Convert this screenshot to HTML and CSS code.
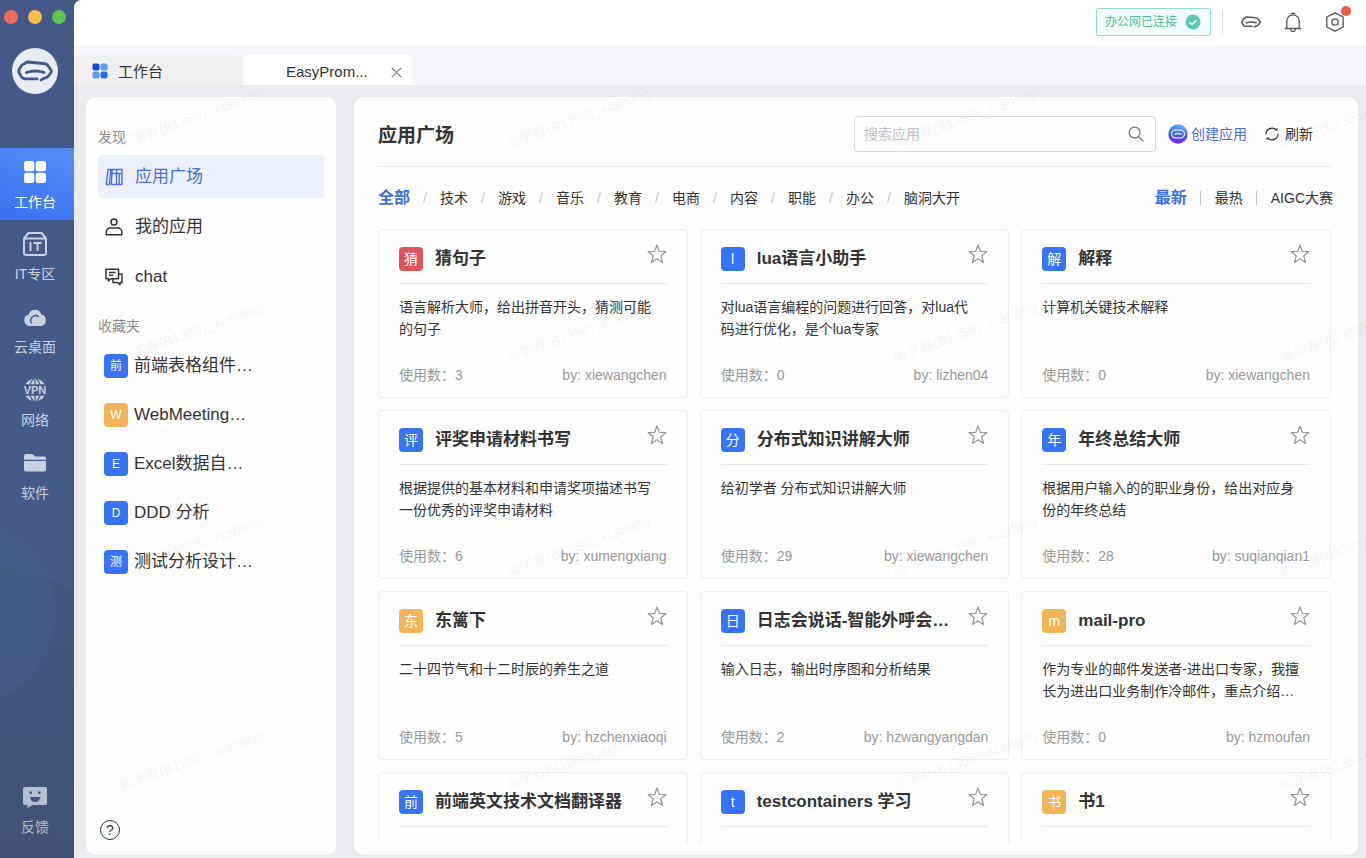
FILE: index.html
```html
<!DOCTYPE html>
<html lang="zh-CN">
<head>
<meta charset="utf-8">
<meta name="viewport" content="width=device-width, initial-scale=1">
<title>应用广场</title>
<link rel="stylesheet" href="styles.css">
</head>
<body>
<svg class="defs" aria-hidden="true">
  <symbol id="star" viewBox="0 0 20 20"><path d="M10 1l2.300 6.400 6.500.3-5 4.100 1.700 6.700L10 14.800l-5.500 3.700 1.700-6.700-5-4.100 6.500-.3z" fill="none" stroke="currentColor" stroke-width="1.300" stroke-linejoin="round"/></symbol>
  <symbol id="link" viewBox="0 0 46 46"><g fill="none" stroke="currentColor" stroke-linecap="round" stroke-linejoin="round"><path d="M15 14L31.500 15.500Q34.500 15.500 36 17.800L39 22Q39.700 23.300 39 24.500L36 28.500Q34.800 29.800 32.500 30L29 32M15 14L12 16Q10 16.500 9 18.200L7 22Q6.400 23.200 7 24.500L9.500 29Q10.500 30.700 13 30.800H25"/><path d="M14.500 24.500Q23 21.500 32 24.500"/></g></symbol>
</svg>

<div class="app">
  <aside class="rail">
    <div class="lights"><span class="light red"></span><span class="light amber"></span><span class="light green"></span></div>
    <div class="logo"><svg viewBox="0 0 46 46" stroke-width="2.800"><use href="#link" width="46" height="46"/></svg></div>
    <nav class="rail-nav">
      <a href="#" class="rail-item active">
        <svg viewBox="0 0 24 24" fill="currentColor"><rect x="1" y="1" width="10.300" height="10.300" rx="2.500"/><rect x="12.700" y="1" width="10.300" height="10.300" rx="2.500"/><rect x="1" y="12.700" width="10.300" height="10.300" rx="2.500"/><rect x="12.700" y="12.700" width="10.300" height="10.300" rx="2.500"/></svg>
        <span>工作台</span></a>
      <a href="#" class="rail-item">
        <svg viewBox="0 0 24 24" fill="none" stroke="currentColor" stroke-width="2"><path d="M1 6.500L5.500 1h13L23 6.500V21a2 2 0 0 1-2 2H3a2 2 0 0 1-2-2z" stroke-linejoin="round"/><path d="M1.500 6.500h21"/><path d="M7.500 10v9M10.500 11h8M14.500 11v8"/></svg>
        <span>IT专区</span></a>
      <a href="#" class="rail-item">
        <svg viewBox="0 0 24 24"><path fill="currentColor" d="M6 21a5.900 5.900 0 0 1-.3-11.500 6.600 6.600 0 0 1 12.700 0A5.900 5.900 0 0 1 18 21z"/><path d="M8.300 18a5 5 0 0 1 7.200-6.500" fill="none" stroke="#445987" stroke-width="1.400" stroke-linecap="round"/></svg>
        <span>云桌面</span></a>
      <a href="#" class="rail-item">
        <svg viewBox="0 0 24 24"><g fill="currentColor"><path d="M2.500 6.200A11 11 0 0 1 21.500 6.200z"/><path d="M2.500 17.800a11 11 0 0 0 19 0z"/></g><g fill="none" stroke="#445987" stroke-width="1.200"><path d="M7 6.500Q8 3 10.500 1M17 6.500Q16 3 13.500 1M12 1v5.500M7 17.500Q8 21 10.500 23M17 17.500Q16 21 13.500 23M12 17.500V23"/></g><text class="vpn" x="12" y="16">VPN</text></svg>
        <span>网络</span></a>
      <a href="#" class="rail-item">
        <svg viewBox="0 0 24 24" fill="currentColor"><path d="M1 5a2 2 0 0 1 2-2h6.500l2.500 2.500H21a2 2 0 0 1 2 2v1.200H1z"/><path d="M1 10h22v8.500a2 2 0 0 1-2 2H3a2 2 0 0 1-2-2z"/></svg>
        <span>软件</span></a>
    </nav>
    <a href="#" class="rail-item feedback">
      <svg viewBox="0 0 24 24"><path fill="currentColor" d="M2 2h20a2 2 0 0 1 2 2v14a2 2 0 0 1-2 2H9.500L4.500 23V20H2a2 2 0 0 1-2-2V4a2 2 0 0 1 2-2z"/><path fill="#43547a" d="M6.500 6.500H9V9H6.500zM15 6.500h2.500V9H15zM7 12h10.500Q16.500 17 12.200 17T7 12z"/></svg>
      <span>反馈</span></a>
  </aside>

  <div class="window">
    <header class="topbar">
      <button class="net" type="button">办公网已连接
        <svg viewBox="0 0 16 16"><circle cx="8" cy="8" r="7.500" fill="#5fcab2"/><path d="M4.500 8.200l2.500 2.300 4.500-4.500" fill="none" stroke="#fff" stroke-width="1.400"/></svg></button>
      <span class="bar-line"></span>
      <button class="tool" type="button" aria-label="链接"><svg viewBox="5 5 36 36" stroke-width="2.800"><use href="#link" width="46" height="46"/></svg></button>
      <button class="tool" type="button" aria-label="通知"><svg viewBox="0 0 20 20" fill="none" stroke="currentColor" stroke-width="1.300" stroke-linecap="round" stroke-linejoin="round"><path d="M2.300 16.500h15.400M3.800 16.300V9a6.200 6.200 0 0 1 12.400 0v7.300M8 1.300h4M7.800 17.500a2.200 2.200 0 0 0 4.400 0"/></svg></button>
      <button class="tool" type="button" aria-label="设置"><svg viewBox="0 0 20 20" fill="none" stroke="currentColor" stroke-width="1.300" stroke-linejoin="round"><path d="M10 .8l8.200 4.200v10L10 19.200 1.800 15V5z"/><circle cx="10" cy="10" r="3.200"/></svg><i class="dot"></i></button>
    </header>

    <nav class="tabs">
      <a href="#" class="tab home">
        <svg viewBox="0 0 16 16"><rect x=".5" y=".5" width="7" height="7" rx="2" fill="#1147e0"/><rect x="8.500" y=".5" width="7" height="7" rx="2" fill="#5b9cf0"/><rect x=".5" y="8.500" width="7" height="7" rx="2" fill="#5b9cf0"/><rect x="8.500" y="8.500" width="7" height="7" rx="2" fill="#2a6cf0"/></svg>
        <span>工作台</span></a>
      <div class="tab current"><a href="#">EasyProm...</a>
        <button type="button" aria-label="关闭"><svg viewBox="0 0 10 10"><path d="M.7.7l8.600 8.600M9.300.7L.7 9.300" stroke="currentColor" stroke-width="1"/></svg></button></div>
    </nav>

    <div class="content">
      <aside class="panel side">
        <h2 class="group">发现</h2>
        <nav class="menu">
          <a href="#" class="menu-item selected"><svg viewBox="0 0 18 18" fill="none" stroke="currentColor" stroke-width="1.400" stroke-linejoin="round"><path d="M3 1.500H6L4.300 16.500H1.200zM7.200 1.500h4.300v15H6.300zM11.500 1.500H17v15h-5.500M7 5.500h10M14.200 5.500v11"/></svg>应用广场</a>
          <a href="#" class="menu-item"><svg viewBox="0 0 18 18" fill="none" stroke="currentColor" stroke-width="1.500"><circle cx="9" cy="4" r="3"/><path d="M1.200 16.700V14a4 4 0 0 1 4-4h7.600a4 4 0 0 1 4 4v2.700z" stroke-linejoin="round"/></svg>我的应用</a>
          <a href="#" class="menu-item"><svg viewBox="0 0 18 18" fill="none" stroke="currentColor" stroke-width="1.500" stroke-linejoin="round"><path d="M1 1.200h12.500v9.500H6L3.500 13v-2.300H1z"/><path d="M13.500 6H17v8.500h-2v2.200l-2.500-2.200H8v-3.500M4 4.500h6.500M4 7.300h4"/></svg>chat</a>
        </nav>
        <h2 class="group favs-title">收藏夹</h2>
        <nav class="favs">
          <a href="#" class="fav"><span class="badge small">前</span>前端表格组件…</a>
          <a href="#" class="fav"><span class="badge small orange">W</span>WebMeeting…</a>
          <a href="#" class="fav"><span class="badge small">E</span>Excel数据自…</a>
          <a href="#" class="fav"><span class="badge small">D</span>DDD 分析</a>
          <a href="#" class="fav"><span class="badge small">测</span>测试分析设计…</a>
        </nav>
        <button class="help" type="button" aria-label="帮助">?</button>
      </aside>

      <main class="panel main">
        <div class="head">
          <h1>应用广场</h1>
          <form class="search"><input type="text" placeholder="搜索应用" aria-label="搜索应用"><button type="submit" aria-label="搜索"><svg viewBox="0 0 16 16" fill="none" stroke="currentColor" stroke-width="1.300" stroke-linecap="round"><circle cx="6.600" cy="6.600" r="5.400"/><path d="M10.600 10.600l4.400 4.400"/></svg></button></form>
          <button class="create" type="button"><svg viewBox="0 0 20 20"><defs><linearGradient id="orb" x1=".6" y1="0" x2=".4" y2="1"><stop offset="0" stop-color="#5cb4f5"/><stop offset=".55" stop-color="#3d5cf0"/><stop offset="1" stop-color="#8a1fe8"/></linearGradient></defs><circle cx="10" cy="10" r="9.700" fill="url(#orb)"/><rect x="3.500" y="6.200" width="13" height="7.600" rx="3.800" fill="none" stroke="#e4ecff" stroke-width="1.300"/><path d="M6.500 10.500Q10 8.500 13.500 10.500" stroke="#e4ecff" stroke-width="1.300" fill="none"/></svg>创建应用</button>
          <button class="refresh" type="button"><svg viewBox="0 0 14 14" fill="none" stroke="currentColor" stroke-width="1.200"><path d="M1 7.500A6 6 0 0 1 11.500 3.200M13 6.500A6 6 0 0 1 2.500 10.800"/><path d="M9.500 3.500h3V.8zM4.500 10.500h-3v2.700z" fill="currentColor" stroke="none"/></svg>刷新</button>
        </div>

        <div class="filters">
          <nav class="cats">
            <a href="#" class="on">全部</a><a href="#">技术</a><a href="#">游戏</a><a href="#">音乐</a><a href="#">教育</a><a href="#">电商</a><a href="#">内容</a><a href="#">职能</a><a href="#">办公</a><a href="#">脑洞大开</a>
          </nav>
          <nav class="sorts"><a href="#" class="on">最新</a><a href="#">最热</a><a href="#">AIGC大赛</a></nav>
        </div>

        <div class="grid">
          <article class="card"><header><span class="badge red">猜</span><h3>猜句子</h3><button type="button" aria-label="收藏"><svg><use href="#star"/></svg></button></header><p>语言解析大师，给出拼音开头，猜测可能<br>的句子</p><footer><span>使用数：3</span><span>by: xiewangchen</span></footer></article>
          <article class="card"><header><span class="badge">l</span><h3>lua语言小助手</h3><button type="button" aria-label="收藏"><svg><use href="#star"/></svg></button></header><p>对lua语言编程的问题进行回答，对lua代<br>码进行优化，是个lua专家</p><footer><span>使用数：0</span><span>by: lizhen04</span></footer></article>
          <article class="card"><header><span class="badge">解</span><h3>解释</h3><button type="button" aria-label="收藏"><svg><use href="#star"/></svg></button></header><p>计算机关键技术解释</p><footer><span>使用数：0</span><span>by: xiewangchen</span></footer></article>
          <article class="card"><header><span class="badge">评</span><h3>评奖申请材料书写</h3><button type="button" aria-label="收藏"><svg><use href="#star"/></svg></button></header><p>根据提供的基本材料和申请奖项描述书写<br>一份优秀的评奖申请材料</p><footer><span>使用数：6</span><span>by: xumengxiang</span></footer></article>
          <article class="card"><header><span class="badge">分</span><h3>分布式知识讲解大师</h3><button type="button" aria-label="收藏"><svg><use href="#star"/></svg></button></header><p>给初学者 分布式知识讲解大师</p><footer><span>使用数：29</span><span>by: xiewangchen</span></footer></article>
          <article class="card"><header><span class="badge">年</span><h3>年终总结大师</h3><button type="button" aria-label="收藏"><svg><use href="#star"/></svg></button></header><p>根据用户输入的的职业身份，给出对应身<br>份的年终总结</p><footer><span>使用数：28</span><span>by: suqianqian1</span></footer></article>
          <article class="card"><header><span class="badge orange">东</span><h3>东篱下</h3><button type="button" aria-label="收藏"><svg><use href="#star"/></svg></button></header><p>二十四节气和十二时辰的养生之道</p><footer><span>使用数：5</span><span>by: hzchenxiaoqi</span></footer></article>
          <article class="card"><header><span class="badge">日</span><h3>日志会说话-智能外呼会…</h3><button type="button" aria-label="收藏"><svg><use href="#star"/></svg></button></header><p>输入日志，输出时序图和分析结果</p><footer><span>使用数：2</span><span>by: hzwangyangdan</span></footer></article>
          <article class="card"><header><span class="badge orange">m</span><h3>mail-pro</h3><button type="button" aria-label="收藏"><svg><use href="#star"/></svg></button></header><p>作为专业的邮件发送者-进出口专家，我擅<br>长为进出口业务制作冷邮件，重点介绍…</p><footer><span>使用数：0</span><span>by: hzmoufan</span></footer></article>
          <article class="card"><header><span class="badge">前</span><h3>前端英文技术文档翻译器</h3><button type="button" aria-label="收藏"><svg><use href="#star"/></svg></button></header></article>
          <article class="card"><header><span class="badge">t</span><h3>testcontainers 学习</h3><button type="button" aria-label="收藏"><svg><use href="#star"/></svg></button></header></article>
          <article class="card"><header><span class="badge orange">书</span><h3>书1</h3><button type="button" aria-label="收藏"><svg><use href="#star"/></svg></button></header></article>
        </div>
      </main>
    </div>
  </div>

  <div class="watermark" aria-hidden="true">
    <span>尚学春(B1358)_xcshang</span><span>尚学春(B1358)_xcshang</span><span>尚学春(B1358)_xcshang</span><span>尚学春(B1358)_xcshang</span>
    <span>尚学春(B1358)_xcshang</span><span>尚学春(B1358)_xcshang</span><span>尚学春(B1358)_xcshang</span><span>尚学春(B1358)_xcshang</span>
    <span>尚学春(B1358)_xcshang</span><span>尚学春(B1358)_xcshang</span><span>尚学春(B1358)_xcshang</span><span>尚学春(B1358)_xcshang</span>
    <span>尚学春(B1358)_xcshang</span><span>尚学春(B1358)_xcshang</span><span>尚学春(B1358)_xcshang</span><span>尚学春(B1358)_xcshang</span>
  </div>
</div>
</body>
</html>
```

FILE: styles.css
```css
* { box-sizing: border-box; }

body {
  margin: 0;
  font: 14px/22px "Liberation Sans", "Noto Sans CJK SC", sans-serif;
  color: #333;
  background: #445987;
}

a { color: inherit; text-decoration: none; }
h1, h2, h3, p { margin: 0; }
svg { display: block; flex: none; }

button {
  font: inherit;
  color: inherit;
  background: none;
  border: 0;
  padding: 0;
  display: flex;
  align-items: center;
  flex: none;
  cursor: pointer;
}

.defs { position: absolute; width: 0; height: 0; }

.app {
  position: relative;
  display: flex;
  height: 100vh;
  overflow: hidden;
}

/* Left rail */
.rail {
  flex: none;
  width: 74px;
  display: flex;
  flex-direction: column;
  color: #c9d1e2;
  background:
    radial-gradient(circle at -37px 614px, rgba(70, 96, 140, .4) 91px, transparent 92px),
    radial-gradient(circle at -10px 737px, rgba(62, 84, 122, .45) 169px, transparent 170px),
    linear-gradient(#445987 0, #455a88 70%, #435070 100%);
}

.lights { display: flex; gap: 10px; padding: 10px 4px 0; }
.light { width: 14px; height: 14px; border-radius: 50%; }
.light.red { background: #ee6a5f; }
.light.amber { background: #f5bd4f; }
.light.green { background: #61c454; }

.logo {
  width: 46px;
  height: 46px;
  margin: 24px 0 54px 12px;
  border-radius: 50%;
  background: #e9ecf3;
  color: #445987;
}

.rail-item {
  display: flex;
  flex-direction: column;
  align-items: center;
  gap: 7px;
  height: 73px;
  padding: 12px 4px 0 0;
}
.rail-item svg { width: 24px; height: 24px; }
.rail-item.active { height: 72px; color: #fff; background: linear-gradient(20deg, #3a70f2, #568ef6); }
.feedback { margin: auto 0 12px; color: #b6c0d3; }
.vpn { font: bold 11px "Liberation Sans", sans-serif; fill: currentColor; text-anchor: middle; }

/* Window chrome */
.window {
  flex: 1;
  min-width: 0;
  display: flex;
  flex-direction: column;
  background: #ebebef;
  border-radius: 8px 0 0 0;
  overflow: hidden;
}

.topbar {
  flex: none;
  height: 46px;
  display: flex;
  align-items: center;
  justify-content: flex-end;
  padding: 0 21px 2px;
  background: #fff;
  color: #555;
}
.net {
  height: 28px;
  gap: 8px;
  padding: 0 9px 0 8px;
  font-size: 12px;
  color: #5cb5a0;
  background: #f0fdfa;
  border: 1px solid #9adccc;
  border-radius: 2px;
}
.net svg { width: 16px; height: 16px; }
.bar-line { width: 1px; height: 24px; margin: 0 18px 0 11px; background: #dcdde0; }
.tool { position: relative; }
.tool + .tool { margin-left: 22px; }
.tool svg { width: 20px; height: 20px; }
.dot {
  position: absolute;
  top: -6px;
  right: -6px;
  width: 10px;
  height: 10px;
  border-radius: 50%;
  background: #ec5b47;
}

.tabs {
  flex: none;
  height: 39px;
  display: flex;
  padding-top: 9px;
  background: #f5f6f9;
}
.tab {
  width: 169px;
  display: flex;
  align-items: center;
  padding: 4px 10px 0 18px;
  border-radius: 6px 6px 0 0;
}
.home { gap: 10px; background: #f0f0f1; }
.home svg { width: 16px; height: 16px; margin-bottom: 2px; }
.home span, .current a { font-size: 15px; }
.current { justify-content: space-between; padding-left: 43px; background: #fff; }
.current button { color: #777; }
.current svg { width: 11px; height: 11px; }

/* Panels */
.content {
  flex: 1;
  min-height: 0;
  display: flex;
  gap: 18px;
  padding: 12px 8px 3px 12px;
}
.panel { background: #fefefe; border-radius: 10px; display: flex; flex-direction: column; }

.side { flex: none; width: 250px; padding: 29px 12px 12px; }
.group { font-size: 14px; font-weight: 400; color: #8c8c8c; }
.menu { display: flex; flex-direction: column; gap: 7px; padding-top: 7px; }
.menu-item, .fav { display: flex; align-items: center; height: 43px; font-size: 17px; }
.menu-item { gap: 12px; padding: 0 7px; border-radius: 4px; }
.menu-item svg { width: 18px; height: 18px; }
.selected { color: #4570e8; background: #ebf0fc; }
.favs-title { padding-top: 17px; }
.favs { display: flex; flex-direction: column; gap: 6px; padding-top: 7px; }
.fav { gap: 6px; padding: 0 6px; }

.badge {
  flex: none;
  width: 24px;
  height: 24px;
  border-radius: 4px;
  font-size: 14px;
  line-height: 24px;
  text-align: center;
  color: #fff;
  background: #3673f5;
}
.badge.small { font-size: 12px; }
.orange { background: #f3b459; }
.red { background: #e0535d; }

.help {
  width: 20px;
  height: 20px;
  margin: auto 0 3px 2px;
  justify-content: center;
  border: 1px solid #333;
  border-radius: 50%;
}

.main { flex: 1; min-width: 0; padding: 19px 25px 12px 24px; }

.head {
  display: flex;
  align-items: center;
  padding: 0 20px 14px 0;
  border-bottom: 1px solid #ececee;
}
h1 { flex: 1; padding-top: 4px; font-size: 19px; font-weight: 600; }
.search {
  flex: 0 1 302px;
  height: 36px;
  display: flex;
  align-items: center;
  padding: 0 11px 0 9px;
  border: 1px solid #d6d7db;
  border-radius: 4px;
  color: #777;
}
.search input { flex: 1; min-width: 0; padding: 0; border: 0; outline: 0; font: inherit; background: none; }
.search input::placeholder { color: #bfc1c6; opacity: 1; }
.search svg { width: 16px; height: 16px; }
.create { gap: 3px; margin-left: 12px; color: #4570e8; }
.create svg { width: 20px; height: 20px; }
.refresh { gap: 6px; margin-left: 18px; }
.refresh svg { width: 14px; height: 14px; }

.filters { display: flex; justify-content: space-between; padding: 20px 0; }
.cats, .sorts { display: flex; align-items: center; white-space: nowrap; }
.cats a + a::before {
  content: "/";
  display: inline-block;
  width: 30px;
  text-align: center;
  color: #c4c4c8;
}
.sorts a + a::before {
  content: "";
  display: inline-block;
  width: 1px;
  height: 14px;
  margin: 0 14px 0 13px;
  vertical-align: -2px;
  background: #c4c4c8;
}
.filters .on { font-size: 16px; font-weight: 600; color: #3f6df0; }

.grid {
  flex: 1;
  min-height: 0;
  display: grid;
  grid-template-columns: repeat(3, minmax(0, 1fr));
  grid-auto-rows: 169px;
  gap: 12px;
  margin-right: 2px;
  overflow: hidden;
}
.card {
  display: flex;
  flex-direction: column;
  padding: 0 20px 11px;
  border: 1px solid #eeeef0;
  border-radius: 4px;
}
.card header {
  display: flex;
  align-items: center;
  height: 54px;
  padding-top: 5px;
  border-bottom: 1px solid #e9e9eb;
}
.card h3 {
  flex: 1;
  min-width: 0;
  padding-left: 12px;
  font-size: 17px;
  font-weight: 600;
  white-space: nowrap;
}
.card header button { color: #999; padding-bottom: 10px; }
.card header svg { width: 20px; height: 20px; }
.card p { padding-top: 12px; white-space: nowrap; }
.card footer { display: flex; justify-content: space-between; margin-top: auto; color: #999; }

/* Repeated diagonal user mark laid over the whole window */
.watermark {
  position: absolute;
  inset: 11px 0 0 -3px;
  display: grid;
  grid-template-columns: repeat(4, 387px);
  grid-auto-rows: 214px;
  place-items: center;
  overflow: hidden;
  pointer-events: none;
  font-size: 14px;
  color: rgba(0, 0, 0, .06);
}
.watermark span { transform: rotate(-20deg); }
```
